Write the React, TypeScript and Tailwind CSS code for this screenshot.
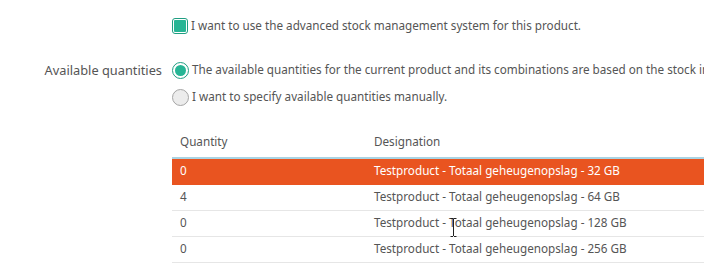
import type { ReactNode } from 'react'

type Row = { qty: number; name: string; selected?: boolean }

const ROWS: Row[] = [
  { qty: 0, name: 'Testproduct - Totaal geheugenopslag - 32 GB', selected: true },
  { qty: 4, name: 'Testproduct - Totaal geheugenopslag - 64 GB' },
  { qty: 0, name: 'Testproduct - Totaal geheugenopslag - 128 GB' },
  { qty: 0, name: 'Testproduct - Totaal geheugenopslag - 256 GB' },
]

function Checkbox() {
  return (
    <span className="grid h-[16px] w-[16px] shrink-0 place-items-center rounded-[3px] border border-[#1f9e82] bg-white">
      <span className="h-[12px] w-[12px] rounded-[1px] bg-[#27b595]" />
    </span>
  )
}

function Radio({ checked }: { checked?: boolean }) {
  if (checked) {
    return (
      <span className="grid h-[17px] w-[17px] shrink-0 place-items-center rounded-full border border-[#1f9e82] bg-white">
        <span className="h-[11px] w-[11px] rounded-full bg-[#27b595]" />
      </span>
    )
  }
  return <span className="h-[17px] w-[17px] shrink-0 rounded-full border border-[#a5a5a5] bg-[#ececec]" />
}

function Option({ control, children }: { control: ReactNode; children: ReactNode }) {
  return (
    <div className="flex h-[18px] items-center gap-[3px] whitespace-nowrap">
      {control}
      <span>{children}</span>
    </div>
  )
}

export default function App() {
  return (
    <div className="relative h-[268px] w-[704px] overflow-hidden bg-white font-['Noto_Sans',sans-serif] text-[11.7px] text-[#555]">
      <div className="pl-[172px] pt-[17px]">
        <Option control={<Checkbox />}>I want to use the advanced stock management system for this product.</Option>
      </div>

      <div className="mt-[26px] flex">
        <div className="w-[162px] shrink-0 text-right text-[12.8px] leading-[18px]">Available quantities</div>
        <div className="ml-[10px] flex min-w-0 flex-col gap-[9px]">
          <Option control={<Radio checked />}>
            The available quantities for the current product and its combinations are based on the stock in your warehouse
          </Option>
          <Option control={<Radio />}>I want to specify available quantities manually.</Option>
        </div>
      </div>

      <table className="ml-[172px] mt-[20px] w-[532px] border-collapse text-left">
        <thead>
          <tr className="h-[32px] border-b-2 border-[#a9d3e3]">
            <th className="w-[202px] pl-[8px] font-normal">Quantity</th>
            <th className="font-normal">Designation</th>
          </tr>
        </thead>
        <tbody>
          {ROWS.map((r, i) => (
            <tr
              key={i}
              className={r.selected ? 'h-[26px] border-b border-[#e95420] bg-[#e95420] text-white' : 'h-[26px] border-b border-[#e6e6e6]'}
            >
              <td className="pl-[8px]">{r.qty}</td>
              <td className="whitespace-nowrap">{r.name}</td>
            </tr>
          ))}
        </tbody>
      </table>

      {/* text cursor */}
      <svg className="absolute left-[450px] top-[218px]" width="7" height="19" viewBox="0 0 7 19">
        <path d="M0.5 0.5h2.5M4 0.5h2.5M3.5 1v17M0.5 18.5h2.5M4 18.5h2.5" stroke="#222" strokeWidth="1" fill="none" />
      </svg>
    </div>
  )
}
